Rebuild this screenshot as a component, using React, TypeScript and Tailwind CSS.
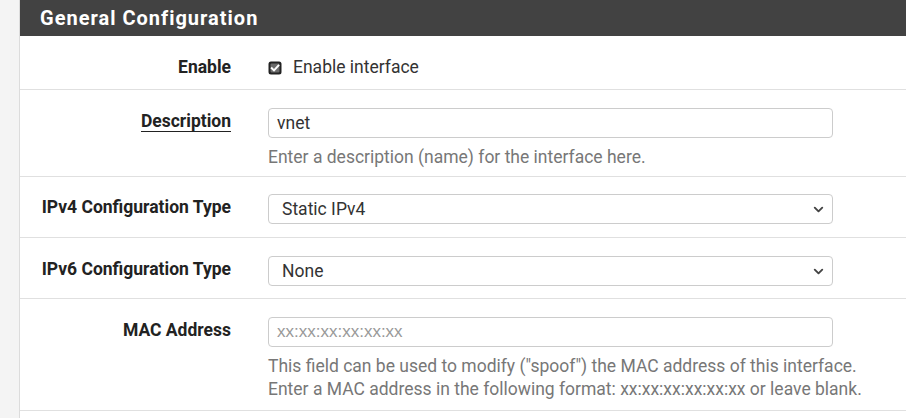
import { ChevronDown } from "lucide-react";

const font = { fontFamily: "Roboto, 'Liberation Sans', Arial, sans-serif" };

function CheckedBox() {
  return (
    <svg width="14" height="14" viewBox="0 0 14 14" className="shrink-0">
      <rect x="0.5" y="0.5" width="13" height="13" rx="2.5" fill="#222" />
      <rect x="2.5" y="2.5" width="9" height="9" rx="1" fill="#6b6b6b" />
      <path d="M3.8 7.2 L6 9.4 L10.4 4.6" stroke="#fff" strokeWidth="2" fill="none" strokeLinecap="square" />
    </svg>
  );
}

function Label({ children, underline = false }: { children: React.ReactNode; underline?: boolean }) {
  return (
    <div className="w-[211px] shrink-0 pt-[2px] text-right text-[17.5px] leading-[23px] font-bold text-[#222]">
      {underline ? <span className="border-b border-[#222]">{children}</span> : children}
    </div>
  );
}

function Help({ children }: { children: React.ReactNode }) {
  return <div className="mt-[8px] text-[17.5px] leading-[23px] text-[#777]">{children}</div>;
}

function TextInput({ value, placeholder }: { value?: string; placeholder?: string }) {
  return (
    <div className="flex h-[30px] w-[565px] items-center rounded-[4px] border border-[#ccc] bg-white px-[8px] text-[17.5px]">
      {value ? (
        <span className="text-[#333]">{value}</span>
      ) : (
        <span className="text-[#999]" style={{ fontFamily: "'Liberation Sans', Arial, sans-serif", fontSize: 17 }}>
          {placeholder}
        </span>
      )}
    </div>
  );
}

function Select({ value }: { value: string }) {
  return (
    <div className="flex h-[30px] w-[565px] items-center justify-between rounded-[4px] border border-[#ccc] bg-white pl-[13px] pr-[6px] text-[17.5px] text-[#333]">
      <span>{value}</span>
      <ChevronDown size={15} strokeWidth={3} className="text-[#444]" />
    </div>
  );
}

export default function App() {
  return (
    <div className="h-[418px] w-[906px] overflow-hidden bg-[#f4f4f4] pl-[19px]" style={font}>
      <div className="h-full border-l border-[#dcdcdc] bg-white">
        <div className="flex h-[36px] items-center bg-[#424242] pl-[20px] text-[20px] font-bold tracking-[1px] text-white">
          General Configuration
        </div>

        {/* Enable */}
        <div className="flex h-[54px] items-start gap-[37px] border-b border-[#e0e0e0] pt-[18px]">
          <Label>Enable</Label>
          <div className="flex h-[23px] items-center gap-[11px] mt-[2px] text-[17.5px] leading-[23px] text-[#333]">
            <CheckedBox />
            <span>Enable interface</span>
          </div>
        </div>

        {/* Description */}
        <div className="flex h-[87px] gap-[37px] border-b border-[#e0e0e0] pt-[18px]">
          <Label underline>Description</Label>
          <div>
            <TextInput value="vnet" />
            <Help>Enter a description (name) for the interface here.</Help>
          </div>
        </div>

        {/* IPv4 */}
        <div className="flex h-[61px] gap-[37px] border-b border-[#e0e0e0] pt-[17px]">
          <Label>IPv4 Configuration Type</Label>
          <Select value="Static IPv4" />
        </div>

        {/* IPv6 */}
        <div className="flex h-[61px] gap-[37px] border-b border-[#e0e0e0] pt-[18px]">
          <Label>IPv6 Configuration Type</Label>
          <Select value="None" />
        </div>

        {/* MAC */}
        <div className="flex h-[112px] gap-[37px] border-b border-[#e0e0e0] pt-[18px]">
          <Label>MAC Address</Label>
          <div>
            <TextInput placeholder="xx:xx:xx:xx:xx:xx" />
            <Help>
              This field can be used to modify ("spoof") the MAC address of this interface.
              <br />
              Enter a MAC address in the following format: xx:xx:xx:xx:xx:xx or leave blank.
            </Help>
          </div>
        </div>
      </div>
    </div>
  );
}
